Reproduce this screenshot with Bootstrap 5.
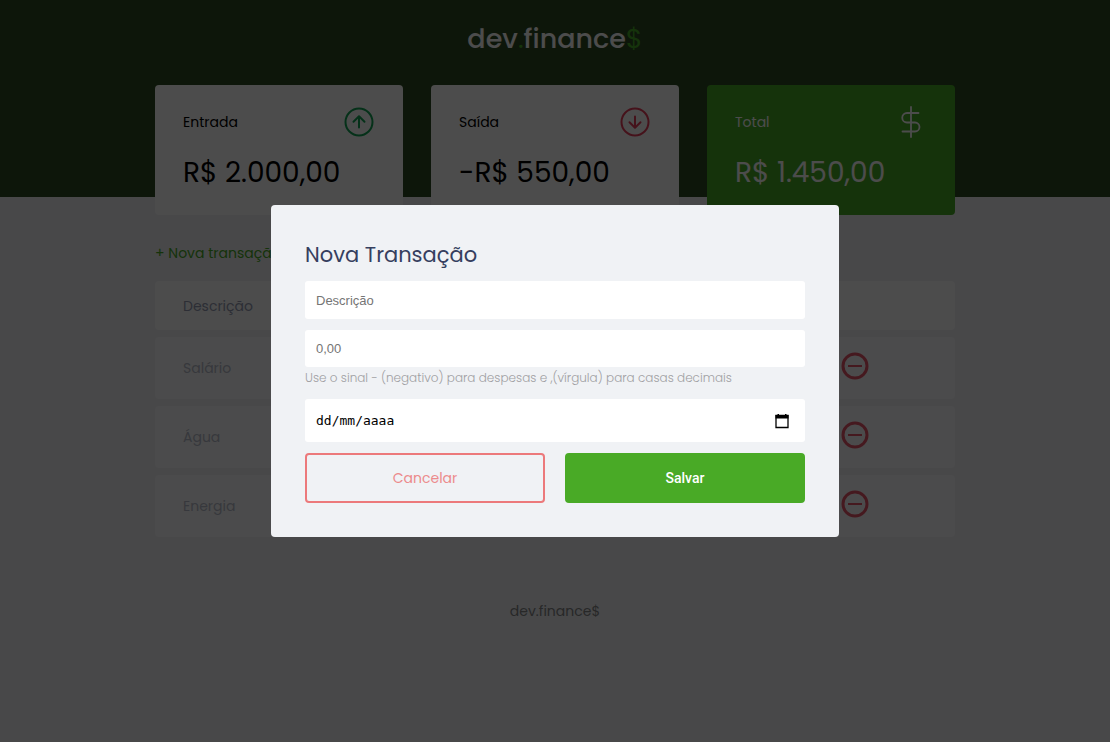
<!DOCTYPE html>
<html lang="pt-BR">
<head>
<meta charset="utf-8">
<meta name="viewport" content="width=device-width, initial-scale=1">
<title>dev.finance$</title>
<link href="https://cdn.jsdelivr.net/npm/bootstrap@5.3.0/dist/css/bootstrap.min.css" rel="stylesheet">
<style>
body { background: #f0f2f5; font-family: Poppins, Inter, sans-serif; font-size: 14px; line-height: 24px; color: #000; overflow: hidden; }
.page-wrap { max-width: 800px; }
.top-band { background: #2d4a22; padding: 18px 0 112px; }
.logo-text { font-size: 27px; line-height: 42px; font-weight: 500; margin-bottom: 25px; }
.logo-accent { color: #49aa26; font-weight: 400; }
.summary { gap: 28px; margin-bottom: -130px; }
.summary-card { border: 0; border-radius: 4px; padding: 21px 28px; height: 130px; }
.summary-card.total { background: #49aa26; color: #fff; }
.summary-card h3 { font-size: 14px; line-height: 24px; font-weight: 400; }
.summary-card p { font-size: 28px; line-height: 42px; font-weight: 400; margin-top: 14px; }
.content { padding-top: 44px; }
.new-link { color: #49aa26; text-decoration: none; }
.moves { border-collapse: separate; border-spacing: 0 7px; margin-top: 9px; }
.moves th { height: 49px; font-weight: 400; color: #969cb3; background: #fff; padding: 0 28px; }
.moves td { height: 62px; color: #b8bccb; background: #fcfcfd; padding: 0 28px; }
.moves td:last-child { padding-bottom: 4px; }
.moves tr > :first-child { border-radius: 4px 0 0 4px; }
.moves tr > :last-child { border-radius: 0 4px 4px 0; width: 142px; }
.page-foot { color: #858587; margin-top: 55px; }
.overlay { background: rgba(0, 0, 0, .7); z-index: 10; }
.dialog { background: #f0f2f5; max-width: 568px; padding: 34px; border-radius: 4px; }
.dialog h2 { font-size: 21px; line-height: 32px; font-weight: 400; color: #363f5f; margin-bottom: 10px; }
.field { border: 0; border-radius: 3px; padding: 0 11px; height: 38px; font: 13px/20px "Liberation Sans", Arial, sans-serif; color: #000; background: #fff; }
.field-amount { height: 37px; margin-top: 11px; }
.field::placeholder { color: #757575; opacity: 1; }
.field-date { height: 43px; font: 13px/20px "DejaVu Sans Mono", monospace; }
.field-date::placeholder { color: #000; }
.date-icon { right: 16px; }
.hint { font-size: 12px; line-height: 22px; font-weight: 300; color: #a0a0a3; margin-bottom: 10px; }
.actions { gap: 20px; margin-top: 11px; }
.action { height: 50px; border-radius: 4px; flex: 1 1 0; padding: 0; border: 2px solid #49aa26; }
.action-cancel, .action-cancel:hover { border-color: #ec797b; color: #ec8b8c; text-decoration: none; }
.action-save { background: #49aa26; color: #fff; font: 500 14px/20px Roboto, sans-serif; }
</style>
<script src="https://cdn.jsdelivr.net/npm/bootstrap@5.3.0/dist/js/bootstrap.bundle.min.js"></script>
</head>
<body>
<header class="top-band">
  <h1 class="logo-text text-center text-white">dev<span class="logo-accent">.</span>finance<span class="logo-accent">$</span></h1>
  <section class="page-wrap mx-auto summary d-flex">
    <div class="card summary-card flex-fill w-100">
      <div class="d-flex justify-content-between align-items-center">
        <h3 class="mb-0">Entrada</h3>
        <svg width="32" height="32" viewBox="0 0 32 32" fill="none" stroke="#12a454" stroke-width="2" stroke-linecap="round" stroke-linejoin="round"><circle cx="16" cy="16" r="13.5"/><path d="M16 21.5V11M10.500 15.800L16 10.300l5.500 5.500"/></svg>
      </div>
      <p class="mb-0 text-nowrap">R$ 2.000,00</p>
    </div>
    <div class="card summary-card flex-fill w-100">
      <div class="d-flex justify-content-between align-items-center">
        <h3 class="mb-0">Saída</h3>
        <svg width="32" height="32" viewBox="0 0 32 32" fill="none" stroke="#e83f5b" stroke-width="2" stroke-linecap="round" stroke-linejoin="round"><circle cx="16" cy="16" r="13.500"/><path d="M16 10.500V21M10.500 16.200L16 21.700l5.500-5.500"/></svg>
      </div>
      <p class="mb-0 text-nowrap">-R$ 550,00</p>
    </div>
    <div class="card summary-card total flex-fill w-100">
      <div class="d-flex justify-content-between align-items-center">
        <h3 class="mb-0">Total</h3>
        <svg width="32" height="32" viewBox="0 0 32 32" fill="none" stroke="#fff" stroke-width="1.800" stroke-linecap="round"><path d="M16 1v30M23.500 7H12a4.500 4.500 0 0 0 0 9.500h8a4.500 4.500 0 0 1 0 9H7.500"/></svg>
      </div>
      <p class="mb-0 text-nowrap">R$ 1.450,00</p>
    </div>
  </section>
</header>

<main class="page-wrap mx-auto content">
  <a href="#" class="new-link">+ Nova transação</a>
  <table class="moves w-100">
    <thead><tr><th scope="col">Descrição</th><th></th></tr></thead>
    <tbody>
      <tr><td>Salário</td><td><button class="btn p-0 border-0 d-block" aria-label="Remover"><svg class="d-block" width="28" height="28" viewBox="0 0 28 28" fill="none" stroke="#e8546a"><circle cx="14" cy="14" r="12" stroke-width="3"/><path d="M7 14h14" stroke-width="2"/></svg></button></td></tr>
      <tr><td>Água</td><td><button class="btn p-0 border-0 d-block" aria-label="Remover"><svg class="d-block" width="28" height="28" viewBox="0 0 28 28" fill="none" stroke="#e8546a"><circle cx="14" cy="14" r="12" stroke-width="3"/><path d="M7 14h14" stroke-width="2"/></svg></button></td></tr>
      <tr><td>Energia</td><td><button class="btn p-0 border-0 d-block" aria-label="Remover"><svg class="d-block" width="28" height="28" viewBox="0 0 28 28" fill="none" stroke="#e8546a"><circle cx="14" cy="14" r="12" stroke-width="3"/><path d="M7 14h14" stroke-width="2"/></svg></button></td></tr>
    </tbody>
  </table>
</main>

<footer class="page-foot text-center">dev.finance$</footer>

<div class="overlay position-fixed top-0 start-0 w-100 h-100 d-flex align-items-center justify-content-center">
  <form class="dialog w-100" role="dialog" aria-labelledby="dialog-title">
    <h2 id="dialog-title">Nova Transação</h2>
    <input class="field w-100 d-block" type="text" placeholder="Descrição" aria-label="Descrição">
    <input class="field field-amount w-100 d-block" type="text" inputmode="decimal" placeholder="0,00" aria-label="Valor" aria-describedby="amount-hint">
    <p id="amount-hint" class="hint">Use o sinal - (negativo) para despesas e ,(vírgula) para casas decimais</p>
    <div class="position-relative d-flex align-items-center">
      <input class="field field-date w-100" type="text" placeholder="dd/mm/aaaa" aria-label="Data">
      <svg class="date-icon position-absolute" width="14" height="16" viewBox="0 0 14 16"><path d="M1 2.500h12v12H1z" fill="none" stroke="#000" stroke-width="1.300"/><path d="M.5 2h13v3.500H.5zM2.500 1h1.500v2H2.500zM10 1h1.500v2H10z"/></svg>
    </div>
    <div class="actions d-flex">
      <a href="#" class="action action-cancel d-flex align-items-center justify-content-center">Cancelar</a>
      <button type="submit" class="action action-save">Salvar</button>
    </div>
  </form>
</div>
</body>
</html>
